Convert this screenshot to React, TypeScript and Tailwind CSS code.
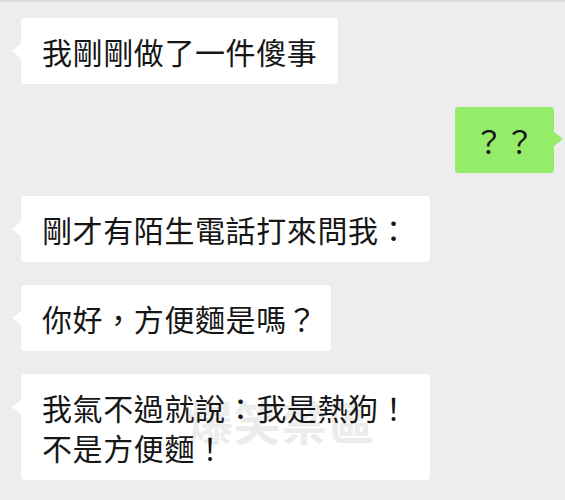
import type { ReactNode } from "react"

const font = {
  fontFamily: '"Noto Sans CJK TC", "Noto Sans CJK SC", sans-serif',
}

function LeftBubble({
  children,
  mark,
  tight,
}: {
  children: ReactNode
  mark?: boolean
  tight?: boolean
}) {
  return (
    <div
      className={
        tight
          ? "relative ml-[21px] self-start rounded-[4px] bg-white py-[13px] pl-[21px] pr-[14px]"
          : "relative ml-[21px] self-start rounded-[4px] bg-white px-[21px] py-[13px]"
      }
    >
      <span className="absolute left-[-9px] top-[26px] h-0 w-0 border-y-[7px] border-r-[9px] border-y-transparent border-r-white" />
      {mark && (
        <span className="absolute left-[166px] top-[20px] whitespace-nowrap text-[46px] font-bold leading-[52px] tracking-[1px] text-[#ececec]">
          爆笑禁區
        </span>
      )}
      <p className="relative whitespace-nowrap text-[30px] leading-[40px] tracking-[0.6px] text-[#161616]">
        {children}
      </p>
    </div>
  )
}

function RightBubble({ children }: { children: ReactNode }) {
  return (
    <div className="relative mr-[11px] self-end rounded-[4px] bg-[#95ec69] px-[19px] py-[13px]">
      <span className="absolute right-[-9px] top-[25px] h-0 w-0 border-y-[7px] border-l-[9px] border-y-transparent border-l-[#95ec69]" />
      <p className="whitespace-nowrap text-[30px] leading-[40px] tracking-[0.6px] text-[#161616]">
        {children}
      </p>
    </div>
  )
}

export default function App() {
  return (
    <div
      className="flex h-[500px] w-full flex-col gap-[23px] overflow-hidden border-t-2 border-[#dedede] bg-[#ededed] pt-[16px]"
      style={font}
    >
      <LeftBubble>我剛剛做了一件傻事</LeftBubble>
      <RightBubble>？？</RightBubble>
      <LeftBubble>剛才有陌生電話打來問我：</LeftBubble>
      <LeftBubble tight>你好，方便麵是嗎？</LeftBubble>
      <LeftBubble mark>
        我氣不過就說：我是熱狗！
        <br />
        不是方便麵！
      </LeftBubble>
    </div>
  )
}
